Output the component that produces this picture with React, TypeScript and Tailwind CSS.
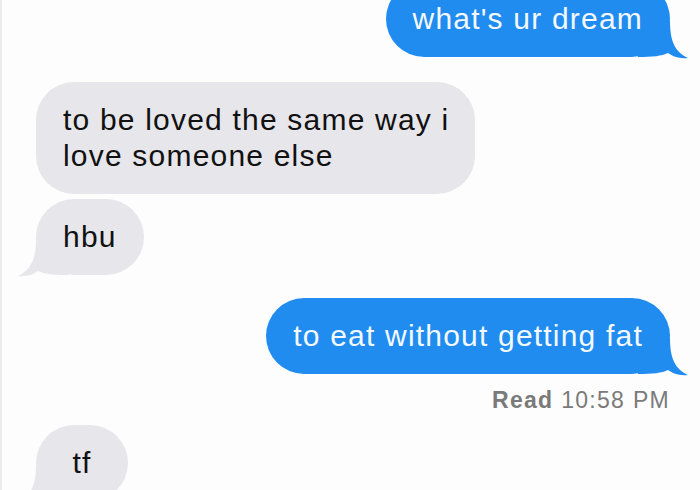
import React from "react";

type Side = "left" | "right";

function Tail({ side, color }: { side: Side; color: string }) {
  // bubble edge sits at x=32 inside the 50px box, bottom at y=36
  return (
    <svg
      width="50"
      height="38"
      viewBox="0 0 50 38"
      className={
        side === "right"
          ? "absolute bottom-[-2px] right-[-18px]"
          : "absolute bottom-[-2px] left-[-18px] -scale-x-100"
      }
    >
      <path
        d="M0 36 L0 0 L32 0 C32 20 37 31 50 37 C41 38 35 35.5 30 32 C24 35 14 36 0 36 Z"
        fill={color}
      />
    </svg>
  );
}

function Bubble({
  side,
  tail = false,
  className = "",
  children,
}: {
  side: Side;
  tail?: boolean;
  className?: string;
  children: React.ReactNode;
}) {
  const mine = side === "right";
  return (
    <div
      className={
        "relative w-fit rounded-[38px] px-[27px] py-[20px] text-[30px] leading-[36px] tracking-[1.2px] " +
        (mine ? "self-end bg-[#218cf0] text-[#f3f9ff] " : "self-start bg-[#e6e6eb] text-[#111111] ") +
        className
      }
    >
      {tail && <Tail side={side} color={mine ? "#218cf0" : "#e6e6eb"} />}
      <span className="relative">{children}</span>
    </div>
  );
}

export default function App() {
  return (
    <div
      className="relative flex h-[490px] w-[700px] flex-col overflow-hidden border-l-2 border-[#ececec] bg-[#fdfdfd]"
      style={{ fontFamily: '"Liberation Sans", Arial, sans-serif' }}
    >
      {/* sent: top, cut off by the crop */}
      <Bubble side="right" tail className="mr-[30px] mt-[-19px]">
        what's ur dream
      </Bubble>

      {/* received */}
      <Bubble side="left" className="ml-[34px] mt-[25px] pr-[26px] leading-[35px] tracking-[0.9px]">
        to be loved the same way i<br />
        love someone else
      </Bubble>
      <Bubble side="left" tail className="ml-[34px] mt-[5px]">
        hbu
      </Bubble>

      {/* sent */}
      <Bubble side="right" tail className="mr-[30px] mt-[23px]">
        to eat without getting fat
      </Bubble>
      <div className="mr-[30px] mt-[12px] self-end text-[23px] leading-[28px] tracking-[1.3px] text-[#7a7a7a]">
        <span className="font-bold">Read</span> 10:58 PM
      </div>

      {/* received, runs off the bottom */}
      <Bubble side="left" tail className="ml-[34px] mt-[11px] min-w-[92px] text-center">
        tf
      </Bubble>
    </div>
  );
}
